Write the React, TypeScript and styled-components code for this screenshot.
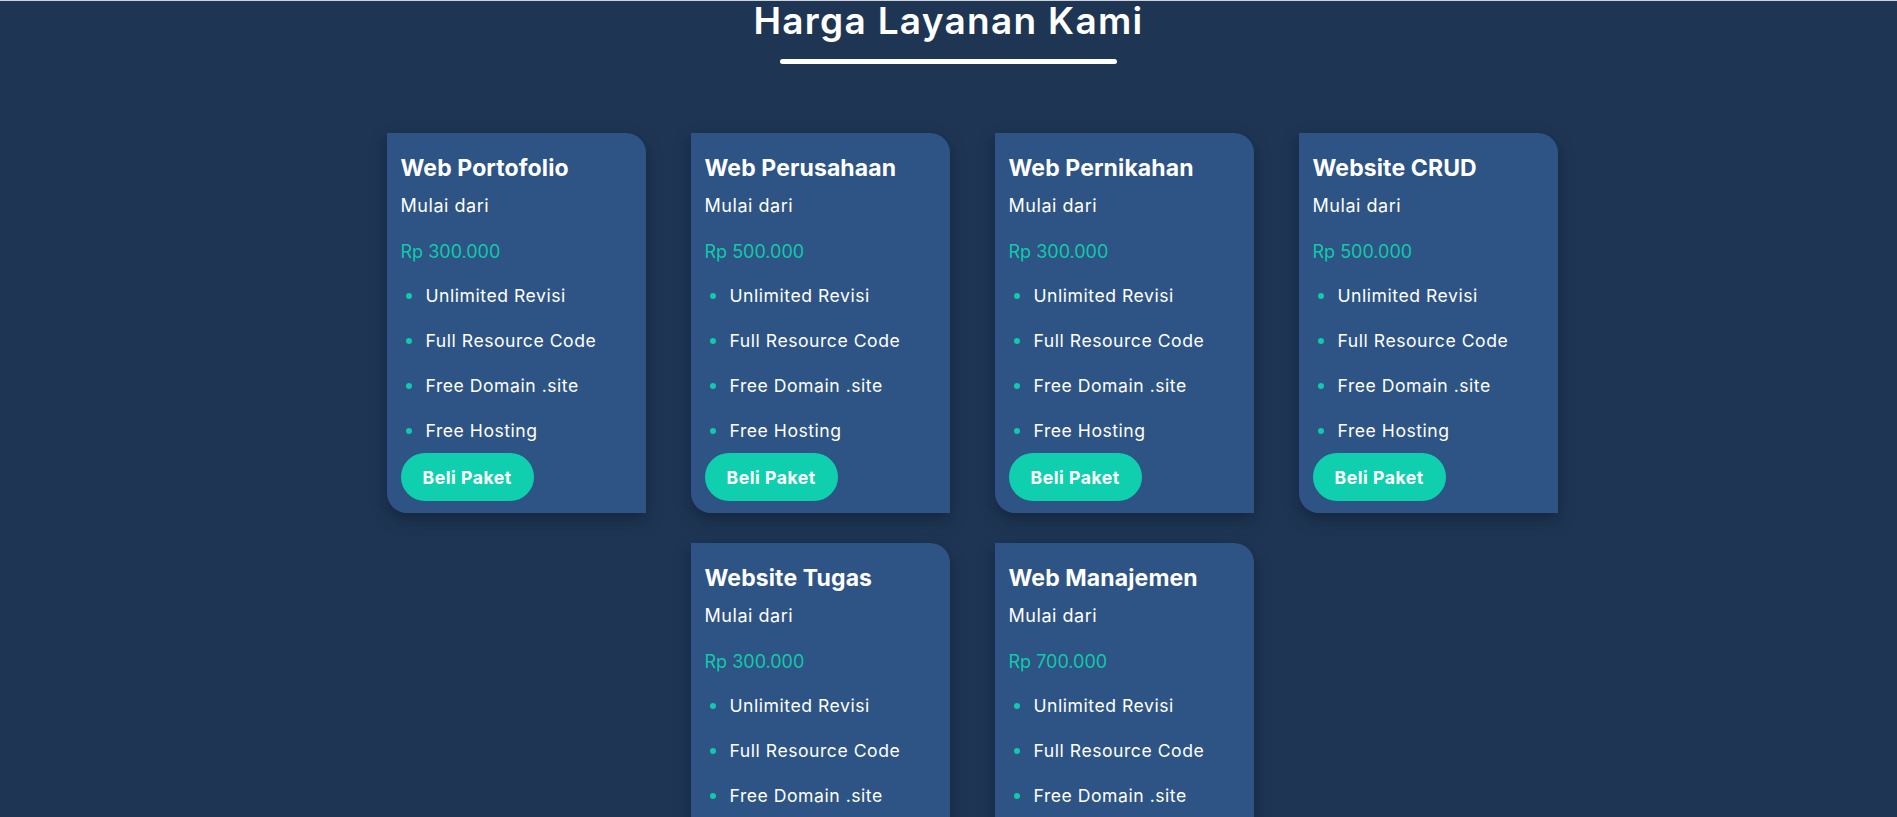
import React from "react";
import styled, { createGlobalStyle } from "styled-components";

const GlobalStyle = createGlobalStyle`
  * { box-sizing: border-box; }
  html, body {
    margin: 0;
    padding: 0;
    background: #1e3654;
  }
  body {
    border-top: 1px solid #cfd3d8;
    font-family: Inter, "Noto Sans", "Liberation Sans", sans-serif;
    color: #ffffff;
  }
`;

const Section = styled.section`
  display: flex;
  flex-direction: column;
  align-items: center;
  padding-bottom: 60px;
`;

const Heading = styled.h2`
  margin: 0;
  font-size: 37px;
  line-height: 40px;
  font-weight: 600;
  letter-spacing: 0.035em;
  color: #ffffff;
  text-align: center;
`;

const Underline = styled.div`
  width: 337px;
  height: 5px;
  margin-top: 18px;
  border-radius: 3px;
  background: #ffffff;
`;

const CardGrid = styled.div`
  width: 1260px;
  display: flex;
  flex-wrap: wrap;
  justify-content: center;
  column-gap: 45px;
  row-gap: 30px;
  margin-top: 69px;
  padding-left: 47px;
`;

const Card = styled.article`
  width: 259px;
  display: flex;
  flex-direction: column;
  align-items: flex-start;
  padding: 20px 14px 12px;
  background: #2d5485;
  border-radius: 0 20px 0 20px;
  box-shadow: 0 6px 16px rgba(8, 18, 35, 0.45);
`;

const CardTitle = styled.h3`
  margin: 0;
  font-size: 23px;
  line-height: 30px;
  font-weight: 700;
  letter-spacing: 0.005em;
  white-space: nowrap;
`;

const Subtitle = styled.p`
  margin: 10px 0 0;
  font-size: 18px;
  line-height: 26px;
  font-weight: 400;
  letter-spacing: 0.03em;
`;

const Price = styled.p`
  margin: 20px 0 0;
  font-size: 18px;
  line-height: 26px;
  font-weight: 400;
  letter-spacing: 0;
  color: #12c9a9;
`;

const Features = styled.ul`
  margin: 18px 0 0;
  padding: 0;
  list-style: none;
  display: flex;
  flex-direction: column;
  gap: 19px;
`;

const Feature = styled.li`
  display: flex;
  align-items: center;
  font-size: 17.6px;
  line-height: 26px;
  letter-spacing: 0.03em;
  white-space: nowrap;

  &::before {
    content: "";
    width: 6px;
    height: 6px;
    margin: 0 14px 0 5px;
    border-radius: 50%;
    background: #12c9a9;
    flex: none;
  }
`;

const BuyButton = styled.button`
  margin-top: 9px;
  height: 48px;
  padding: 0 22px;
  border: none;
  border-radius: 24px;
  background: #10cfae;
  color: #ffffff;
  font-family: inherit;
  font-size: 17.6px;
  font-weight: 700;
  letter-spacing: 0.03em;
  cursor: pointer;
`;

type Plan = { name: string; price: string };

const plans: Plan[] = [
  { name: "Web Portofolio", price: "Rp 300.000" },
  { name: "Web Perusahaan", price: "Rp 500.000" },
  { name: "Web Pernikahan", price: "Rp 300.000" },
  { name: "Website CRUD", price: "Rp 500.000" },
  { name: "Website Tugas", price: "Rp 300.000" },
  { name: "Web Manajemen", price: "Rp 700.000" },
];

const features = [
  "Unlimited Revisi",
  "Full Resource Code",
  "Free Domain .site",
  "Free Hosting",
];

export default function App() {
  return (
    <>
      <GlobalStyle />
      <Section>
        <Heading>Harga Layanan Kami</Heading>
        <Underline />
        <CardGrid>
          {plans.map((p) => (
            <Card key={p.name}>
              <CardTitle>{p.name}</CardTitle>
              <Subtitle>Mulai dari</Subtitle>
              <Price>{p.price}</Price>
              <Features>
                {features.map((f) => (
                  <Feature key={f}>{f}</Feature>
                ))}
              </Features>
              <BuyButton>Beli Paket</BuyButton>
            </Card>
          ))}
        </CardGrid>
      </Section>
    </>
  );
}
